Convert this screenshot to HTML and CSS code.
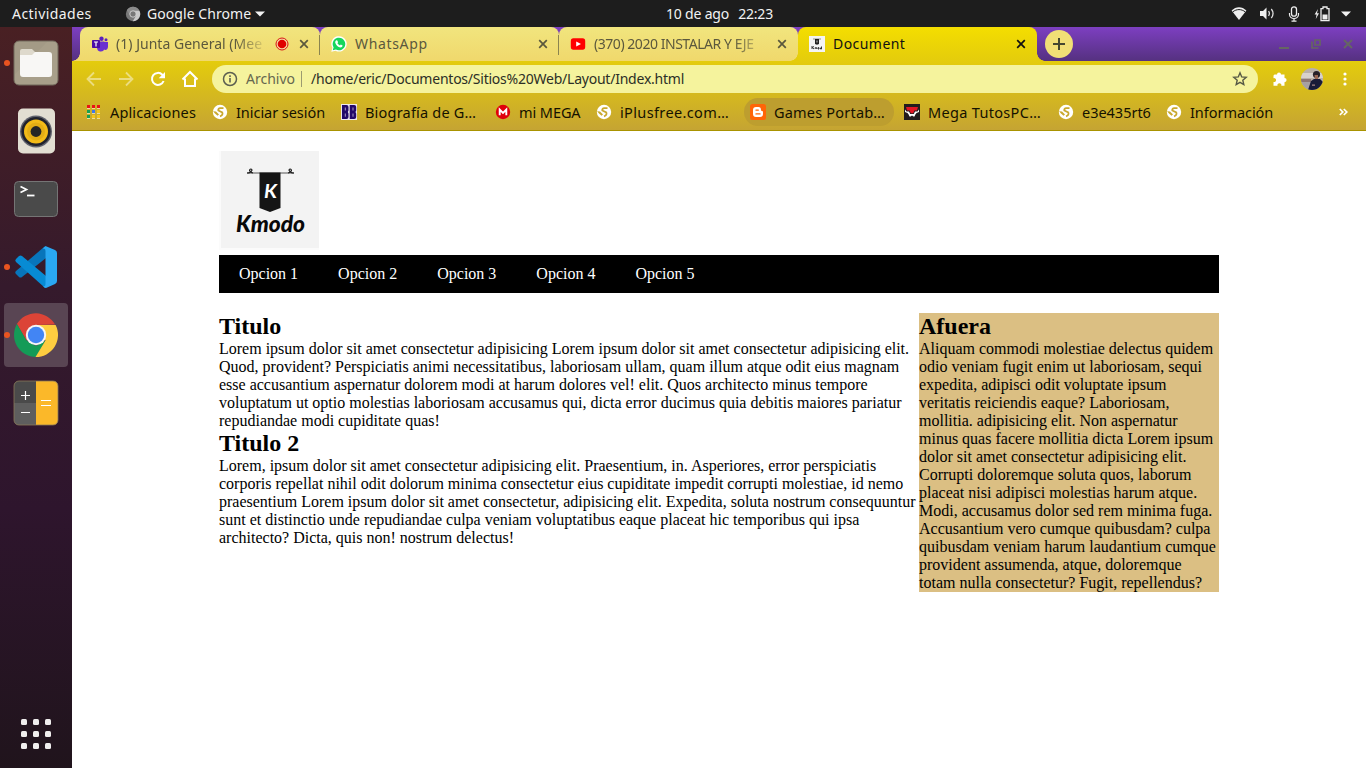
FILE: index.html
```
<!DOCTYPE html>
<html lang="es">
<head>
<meta charset="utf-8">
<title>Document</title>
<link rel="stylesheet" href="styles.css">
</head>
<body>
<svg class="defs" width="0" height="0">
  <symbol id="globe" viewBox="0 0 16 16"><circle cx="8" cy="8" r="7.2" fill="#fff"/><path d="M11.500 4.200H8.300Q6 4.500 6.300 6.500L10.300 8.500Q11.300 11 8 12.300" fill="none" stroke="#c9a92e" stroke-width="1.800"/><path d="M1 7.200l3 .3 3 3-1.500 1.200L3 9.500z" fill="#c9a92e"/></symbol>
  <symbol id="close" viewBox="0 0 10 10"><path d="M1.200 1.200l7.600 7.600M8.800 1.200L1.200 8.800" fill="none" stroke="currentColor" stroke-width="1.700"/></symbol>
</svg>
<div class="desktop">
  <header class="topbar">
    <div class="top-left">
      <span class="ls-act">Actividades</span>
      <svg class="top-chrome" width="16" height="16" viewBox="0 0 16 16"><circle cx="8" cy="8" r="7.200" fill="#777"/><path d="M8 4.500h6.300A7.200 7.200 0 0 1 7.800 15.200L11 9.800z" fill="#c9c9c9"/><path d="M1.800 4.300A7.200 7.200 0 0 1 14.300 4.500H8L4.800 9z" fill="#8b8b8b"/><circle cx="8" cy="8" r="3.200" fill="#777" stroke="#ddd" stroke-width=".8"/></svg>
      <span class="ls-goo">Google Chrome</span>
      <svg class="caret" width="10" height="6" viewBox="0 0 10 6"><path d="M0 .5h10L5 5.500z" fill="#f2f2f2"/></svg>
    </div>
    <div class="clock"><span>10 de ago</span><span>22:23</span></div>
    <div class="tray">
      <svg width="16" height="16" viewBox="0 0 16 16"><path d="M.6 4.500C5-.0 11-.0 15.400 4.500L8 14z" fill="#eee"/><path d="M1.800 5.900C5.500 2.800 10.500 2.800 14.200 5.900" fill="none" stroke="#1d1d1d" stroke-width="1"/></svg>
      <svg width="16" height="16" viewBox="0 0 16 16"><path d="M1 5h3l3.500-3.500v12L4 10H1z" fill="#eee"/><path d="M9.500 5.200q1.800 2.300 0 4.600M12.300 3q3.500 4.500 0 9" fill="none" stroke="#ddd" stroke-width="1.300"/></svg>
      <svg width="12" height="16" viewBox="0 0 12 16"><rect x="3.500" y=".8" width="5" height="9.400" rx="2.500" fill="none" stroke="#eee" stroke-width="1.300"/><path d="M1.500 7v1.500a4.500 4 0 0 0 9 0V7M6 12.500v2.700M3.500 15.200h5" fill="none" stroke="#eee" stroke-width="1.200"/></svg>
      <svg width="16" height="16" viewBox="0 0 16 16"><path d="M4 3L.6 8.600h2L1.800 13 5 7.300H3z" fill="#eee"/><path d="M7 2.600h2V1h4v1.600h2v12.100H7z" fill="none" stroke="#eee" stroke-width="1.300"/><path d="M8.500 8.500h5v5h-5z" fill="#eee"/></svg>
      <svg width="10" height="6" viewBox="0 0 10 6"><path d="M0 .5h10L5 5.500z" fill="#f2f2f2"/></svg>
    </div>
  </header>
  <div class="workspace">
    <nav class="dock">
      <div class="dock-item running"><svg width="46" height="46" viewBox="0 0 46 46"><rect x="1" y="1" width="44" height="44" rx="5" fill="#a39a86" stroke="#736b5d"/><path d="M2 34L34 2h7q3 0 3 3v36q0 3-3 3H5q-3 0-3-3z" fill="#aca38d" opacity=".6"/><path d="M7 11q0-2 2-2h10l3 3q1 2-2 3H7z" fill="#ded9cc"/><path d="M7 15h12l3-3h14q3 0 3 3v19q0 3-3 3H10q-3 0-3-3z" fill="#f8f7f5"/></svg></div>
      <div class="dock-item"><svg width="46" height="46" viewBox="0 0 46 46"><rect x="5" y=".5" width="37" height="45" rx="5" fill="#e2ded2"/><circle cx="23" cy="23.500" r="16" fill="#60626c"/><circle cx="23" cy="23.500" r="14.600" fill="#20222d"/><circle cx="23" cy="23.500" r="12" fill="#f3bb18"/><circle cx="23" cy="23.500" r="9" fill="#e3ad15"/><circle cx="23" cy="23.500" r="5.400" fill="#252525"/></svg></div>
      <div class="dock-item"><svg width="46" height="46" viewBox="0 0 46 46"><rect x="1.500" y="5.500" width="43" height="35" rx="4" fill="#4a4a4a" stroke="#757575"/><path d="M7.500 10.500l6 3-6 3" fill="none" stroke="#fff" stroke-width="1.700"/><path d="M14 19.500h7.500" stroke="#fff" stroke-width="1.800"/></svg></div>
      <div class="dock-item running"><svg width="46" height="46" viewBox="0 0 46 46"><path d="M33 2v12L9 33q-1.500 1-3 0l-3-3q-1.500-1.500 0-3L31 3z" fill="#0875bb"/><path d="M33 44V32L9 12q-1.500-1-3 0l-3 3q-1.500 1.500 0 3l28 25z" fill="#078bd4"/><path d="M33 2.200L42 6q2 1 2 3v28q0 2-2 3l-9 4q-2 0-3-2 2.500 1 2.500-2V7q0-3-2.500-2 .8-2 2.500-2.800z" fill="#2aa8f2"/></svg></div>
      <div class="dock-item running active"><svg width="46" height="46" viewBox="0 0 46 46"><path d="M3.950 12A22 22 0 0 1 42.050 12.600L23 13 13.470 28.500z" fill="#dc4437"/><path d="M3.950 12A22 22 0 0 0 23 45L32.500 28.500 23 34 13.500 28.500z" fill="#149b57"/><path d="M23 13h19.600A22 22 0 0 1 22.500 45L32.500 28.500z" fill="#fecd40"/><circle cx="23" cy="23" r="10.200" fill="#f5f5f5"/><circle cx="23" cy="23" r="8.200" fill="#4285f4"/></svg></div>
      <div class="dock-item"><svg width="46" height="46" viewBox="0 0 46 46"><path d="M23 1H6q-5 0-5 5v17h22z" fill="#4a4a4a"/><path d="M1 23h22v22H6q-5 0-5-5z" fill="#5e5e5e"/><path d="M23 1h17q5 0 5 5v34q0 5-5 5H23z" fill="#fbb829"/><rect x="1" y="1" width="44" height="44" rx="5" fill="none" stroke="#8a7a58" stroke-width=".8"/><path d="M8 15.500h9M12.500 11v9M8 32.500h9M28 20.500h10M28 25.500h10" stroke="#fff" stroke-width="1.200"/></svg></div>
      <div class="apps-grid"><i></i><i></i><i></i><i></i><i></i><i></i><i></i><i></i><i></i></div>
    </nav>
    <main class="browser">
      <div class="chrome">
        <div class="tabstrip">
          <div class="tab first">
            <svg class="fav" viewBox="0 0 16 16"><circle cx="9.500" cy="2.700" r="2.200" fill="#5b20bd"/><circle cx="14" cy="3.800" r="1.500" fill="#5b20bd"/><path d="M5 5.500h7.500V11q0 5-4.500 4.500Q5 15 5 11zM12.500 6H16v5q-.5 3.500-3.800 2.800z" fill="#6b2fd0"/><rect y="4" width="8" height="8" rx=".7" fill="#4a0da6"/><path d="M2 6h4M4 6v4.500" stroke="#fff" stroke-width="1.200"/></svg>
            <span class="tab-title fade ls-jun">(1) Junta General (Mee</span>
            <svg class="rec" width="14" height="14" viewBox="0 0 14 14"><circle cx="7" cy="7" r="6" fill="#f5d9a0" stroke="#d81313" stroke-width="1"/><circle cx="7" cy="7" r="4.300" fill="#e00000"/></svg>
            <svg class="x"><use href="#close"/></svg>
          </div>
          <div class="tab">
            <svg class="fav" viewBox="0 0 16 16"><path d="M.3 15.700L1.400 11.800A7.700 7.700 0 1 1 4.500 14.700z" fill="#fff"/><path d="M1.800 14.300l.8-3A6.300 6.300 0 1 1 4.900 13.500z" fill="#15d65b"/><path d="M5.200 4.300l1.100.1.800 1.800-.7 1q1 1.600 2.500 2.200l.9-.9 1.800.9q0 2-2.200 2-3.700-.5-5.200-4.700-.1-1.500 1-2.400z" fill="#fff"/></svg>
            <span class="tab-title ls-wha">WhatsApp</span>
            <svg class="x"><use href="#close"/></svg>
          </div>
          <div class="tab">
            <svg class="fav" viewBox="0 0 16 16"><rect x=".8" y="2.300" width="14.400" height="11.400" rx="2.600" fill="#f00"/><path d="M6.200 5.400L11 8l-4.800 2.600z" fill="#fff"/></svg>
            <span class="tab-title fade ls-ytb">(370) 2020 INSTALAR Y EJE</span>
            <svg class="x"><use href="#close"/></svg>
          </div>
          <div class="tab current">
            <svg class="fav" viewBox="0 0 16 16"><rect width="16" height="16" fill="#f4f4f4"/><path d="M4 3h8" stroke="#777" stroke-width=".8"/><path d="M6 3h4v5l-2 .8L6 8z" fill="#222"/><path d="M8 4.500v2" stroke="#ddd" stroke-width=".9"/><path d="M3 10v3M5 10.500l-1.700 1L5 13M6.200 13v-1.300h1.500V13M9 11.700h1V13H9zM12.500 10.500V13h-1v-1.300" fill="none" stroke="#222" stroke-width=".9"/></svg>
            <span class="tab-title ls-doc">Document</span>
            <svg class="x"><use href="#close"/></svg>
          </div>
          <div class="strip-end">
            <svg width="28" height="28" viewBox="0 0 28 28"><circle cx="14" cy="14" r="14" fill="#f1df76"/><path d="M8 14h12M14 8v12" stroke="#444730" stroke-width="2"/></svg>
            <div class="winbtns">
              <svg width="10" height="10" viewBox="0 0 10 10"><path d="M0 9h10" stroke="#666663" stroke-width="2"/></svg>
              <svg width="10" height="10" viewBox="0 0 10 10"><path d="M4 1h5v5H4zM1 2.500V9h6.500" fill="none" stroke="#666663" stroke-width="1.700"/></svg>
              <svg width="10" height="10" viewBox="0 0 10 10"><path d="M1 1l8 8M9 1L1 9" stroke="#666663" stroke-width="2"/></svg>
            </div>
          </div>
        </div>
        <div class="toolbar">
          <svg class="faded" width="16" height="16" viewBox="0 0 16 16"><path d="M15 8H2M8 1.500L1.500 8 8 14.500" fill="none" stroke="#fff" stroke-width="1.800"/></svg>
          <svg class="faded" width="16" height="16" viewBox="0 0 16 16"><path d="M1 8h13M8 1.500L14.500 8 8 14.500" fill="none" stroke="#fff" stroke-width="1.800"/></svg>
          <svg width="16" height="16" viewBox="0 0 16 16"><path d="M13.600 10A6 6 0 1 1 12.300 3.700L13.500 5" fill="none" stroke="#fff" stroke-width="2"/><path d="M15 1v6.300H8.700z" fill="#fff"/></svg>
          <svg width="18" height="18" viewBox="0 0 18 18"><path d="M1.500 9.500L9 2l7.500 7.500M4 8.500V16h10V8.500" fill="none" stroke="#fff" stroke-width="2"/></svg>
          <div class="omnibox">
            <svg width="16" height="16" viewBox="0 0 16 16"><circle cx="8" cy="8" r="6.500" fill="none" stroke="#5c5f50" stroke-width="1.500"/><path d="M8 7v4.500M8 4.200v1.700" stroke="#5c5f50" stroke-width="1.600"/></svg>
            <span class="scheme">Archivo</span>
            <span class="url">/home/eric/Documentos/Sitios%20Web/Layout/Index.html</span>
            <svg class="star" width="16" height="16" viewBox="0 0 16 16"><path d="M8 1.800l1.700 4.100 4.500.4-3.400 2.900 1 4.400L8 11.300l-3.800 2.300 1-4.400L1.800 6.300l4.500-.4z" fill="none" stroke="#565945" stroke-width="1.400"/></svg>
          </div>
          <svg class="ext" width="16" height="16" viewBox="0 0 16 16"><path d="M2.500 3.500H5a2 2 0 1 1 4 0h3.500V7a2 2 0 1 1 0 4.200v3.600H9.300a2 2 0 1 0-3.800 0H1.500V11a2 2 0 1 0 0-3.800V4.500z" fill="#fff"/></svg>
          <svg class="avatar" width="22" height="22" viewBox="0 0 22 22"><clipPath id="av"><circle cx="11" cy="11" r="11"/></clipPath><g clip-path="url(#av)"><path d="M0 0h22v22H0z" fill="#b9b0a8"/><path d="M0 5h22v5H0z" fill="#d8d1cc"/><path d="M0 11h10v3H0z" fill="#8d7675"/><path d="M0 14h10v8H0z" fill="#a7a0a3"/><path d="M7 22l3-9 3-2h6l4 4v8z" fill="#191b38"/><circle cx="15.500" cy="6.500" r="3.600" fill="#262027"/><path d="M13.500 7h3.500v4h-3z" fill="#9a6753"/><path d="M11 16.500h3v1.200h-3z" fill="#a78582"/></g></svg>
          <svg class="menu" width="4" height="16" viewBox="0 0 4 16"><circle cx="2" cy="3" r="1.600" fill="#fff"/><circle cx="2" cy="8" r="1.600" fill="#fff"/><circle cx="2" cy="13" r="1.600" fill="#fff"/></svg>
        </div>
        <div class="bookmarks">
          <a class="bm"><svg viewBox="0 0 16 16"><path d="M1 1h3v3H1zM6 1h3v3H6zM11 1h3v3h-3z" fill="#e91515"/><path d="M1 6h3v3H1zM1 11h3v3H1z" fill="#16a052"/><path d="M6 6h3v3H6z" fill="#3f78ea"/><path d="M11 6h3v3h-3zM6 11h3v3H6zM11 11h3v3h-3z" fill="#f6c518"/><path d="M6 4h3v1H6zM1 4h3v1H1zM11 4h3v1h-3zM1 9h3v1H1zM6 9h3v1H6zM11 9h3v1h-3zM1 14h3v1H1zM6 14h3v1H6zM11 14h3v1h-3z" fill="#eddc9c"/></svg><span class="ls-apl">Aplicaciones</span></a>
          <a class="bm"><svg><use href="#globe"/></svg><span class="ls-ini">Iniciar sesión</span></a>
          <a class="bm"><svg viewBox="0 0 16 16"><path d="M0 0h16v16H0z" fill="#eee8ed"/><path d="M1 1h4.500q2 0 2 2v3.500L6.800 8l.7 1.500V13q0 2-2 2H1zM8.700 1h4.500q2 0 2 2v3.500L14.500 8l.7 1.500V13q0 2-2 2H8.700z" fill="#22086a"/><path d="M4.300 3.500v3M4.300 9.500v3.200M12 3.500v3M12 9.500v3.200" stroke="#cdc4dc" stroke-width=".8"/></svg><span class="ls-bio">Biografía de G…</span></a>
          <a class="bm"><svg viewBox="0 0 16 16"><circle cx="8" cy="8" r="7.200" fill="#e0000b"/><path d="M4.700 11.300V5.500L8 8.800l3.300-3.300v5.800" fill="none" stroke="#fff" stroke-width="1.900"/></svg><span class="ls-meg">mi MEGA</span></a>
          <a class="bm"><svg><use href="#globe"/></svg><span class="ls-ipl">iPlusfree.com…</span></a>
          <a class="bm chip"><svg viewBox="0 0 16 16"><rect width="16" height="16" rx="2.500" fill="#ff6507"/><path d="M6 3h2.500Q11 3 11 6q0 1 1 1t1 1v2q0 3-3 3H6q-3 0-3-3V6q0-3 3-3z" fill="#fff"/><path d="M6 6.100h2.300M6 9.900h4" stroke="#ff6507" stroke-width="1.400" stroke-linecap="round"/></svg><span class="ls-gam">Games Portab…</span></a>
          <a class="bm"><svg viewBox="0 0 16 16"><path d="M0 0h16v16H0z" fill="#221c1e"/><path d="M2 3h12l-1 3.500H3z" fill="#e11624"/><path d="M1 5.500L2.500 7.500H5l1.200 2.500h3.600L11 7.500h2.500L15 5.500V8l-2.500 1-1 1.200-1 2.300H9.300L8 11.500l-1.300 1H5.500l-1-2.300-1-1.200L1 8z" fill="#fff"/><path d="M5.500 6h5L9.300 9.200H6.700z" fill="#e11624"/></svg><span class="ls-tut">Mega TutosPC…</span></a>
          <a class="bm"><svg><use href="#globe"/></svg><span class="ls-e3e">e3e435rt6</span></a>
          <a class="bm"><svg><use href="#globe"/></svg><span class="ls-inf">Información</span></a>
          <svg class="more" width="9" height="8" viewBox="0 0 9 8"><path d="M.8 1l3 3-3 3M4.800 1l3 3-3 3" fill="none" stroke="#fff" stroke-width="1.700"/></svg>
        </div>
      </div>
      <div class="page">
        <div class="container">
          <svg class="logo" width="100" height="100" viewBox="0 0 100 100">
            <rect width="100" height="98" fill="#f3f3f3"/><path d="M0 0h2v97h98v2H0z" fill="#fbfbfb"/>
            <path d="M28 22h47" stroke="#555" stroke-width="1"/>
            <path d="M28 22q4 0 5-3-1-2-2.500 0 0 2 3.500 3M75 22q-4 0-5-3 1-2 2.500 0 0 2-3.500 3" fill="none" stroke="#222" stroke-width="1.200"/>
            <path d="M40.500 21.500h21V57l-10.500 4-10.500-4z" fill="#151515"/>
            <text class="script-k" x="45" y="46.500" textLength="13" lengthAdjust="spacingAndGlyphs">K</text>
            <text class="script" x="17" y="81" textLength="69" lengthAdjust="spacingAndGlyphs">Kmodo</text>
          </svg>
          <div class="menu-bar"><a>Opcion 1</a><a>Opcion 2</a><a>Opcion 3</a><a>Opcion 4</a><a>Opcion 5</a></div>
          <div class="columns">
            <section class="content">
              <h2>Titulo</h2>
              <p>Lorem ipsum dolor sit amet consectetur adipisicing Lorem ipsum dolor sit amet consectetur adipisicing elit. Quod, provident? Perspiciatis animi necessitatibus, laboriosam ullam, quam illum atque odit eius magnam esse accusantium aspernatur dolorem modi at harum dolores vel! elit. Quos architecto minus tempore voluptatum ut optio molestias laboriosam accusamus qui, dicta error ducimus quia debitis maiores pariatur repudiandae modi cupiditate quas!</p>
              <h2>Titulo 2</h2>
              <p>Lorem, ipsum dolor sit amet consectetur adipisicing elit. Praesentium, in. Asperiores, error perspiciatis corporis repellat nihil odit dolorum minima consectetur eius cupiditate impedit corrupti molestiae, id nemo praesentium Lorem ipsum dolor sit amet consectetur, adipisicing elit. Expedita, soluta nostrum consequuntur sunt et distinctio unde repudiandae culpa veniam voluptatibus eaque placeat hic temporibus qui ipsa architecto? Dicta, quis non! nostrum delectus!</p>
            </section>
            <aside class="aside">
              <h2>Afuera</h2>
              <p>Aliquam commodi molestiae delectus quidem odio veniam fugit enim ut laboriosam, sequi expedita, adipisci odit voluptate ipsum veritatis reiciendis eaque? Laboriosam, mollitia. adipisicing elit. Non aspernatur minus quas facere mollitia dicta Lorem ipsum dolor sit amet consectetur adipisicing elit. Corrupti doloremque soluta quos, laborum placeat nisi adipisci molestias harum atque. Modi, accusamus dolor sed rem minima fuga. Accusantium vero cumque quibusdam? culpa quibusdam veniam harum laudantium cumque provident assumenda, atque, doloremque totam nulla consectetur? Fugit, repellendus?</p>
            </aside>
          </div>
        </div>
      </div>
    </main>
  </div>
</div>
</body>
</html>
```
FILE: styles.css
```
* { box-sizing: border-box; margin: 0; padding: 0; }
body { width: 1366px; height: 768px; overflow: hidden; background: #fff; }
svg { display: block; flex: none; }
.defs { position: absolute; }
.desktop { width: 1366px; height: 768px; display: flex; flex-direction: column; }
.topbar, .chrome { font: 14px/20px "Noto Sans", "Open Sans", sans-serif; white-space: nowrap; }

.topbar { height: 27px; flex: none; background: #1d1d1d; color: #f2f2f2; display: grid; grid-template-columns: 666px 107px 1fr; align-items: center; }
.top-left { display: flex; align-items: center; padding-left: 12px; }
.top-left .ls-act { width: 113px; }
.top-chrome { margin-right: 6px; }
.top-left .caret { margin-left: 4px; }
.clock { display: flex; justify-content: space-between; letter-spacing: -.19px; }
.tray { display: flex; align-items: center; padding-left: 458px; }
.tray svg + svg { margin-left: 12px; }
.tray svg:nth-child(3) { margin-left: 13px; }
.tray svg:nth-child(4) { margin-left: 14px; }
.tray svg:nth-child(5) { margin-left: 11px; }

.workspace { flex: 1; display: flex; min-height: 0; }
.dock { width: 72px; flex: none; display: flex; flex-direction: column; align-items: flex-end; gap: 4px; padding: 4px 4px 19px 0; background: linear-gradient(#492023, #351a2c 35%, #2e152d 65%, #20141c); }
.dock-item { width: 64px; height: 64px; display: flex; align-items: center; justify-content: center; border-radius: 4px; position: relative; }
.dock-item.active { background: #594553; }
.dock-item.running::before { content: ""; position: absolute; left: 0; top: 29px; width: 6px; height: 6px; border-radius: 50%; background: #e95420; }
.apps-grid { display: grid; grid-template-columns: repeat(3, 6px); gap: 6px; margin: auto 17px 0 0; }
.apps-grid i { height: 6px; border-radius: 1.5px; background: #f0eeee; }

.browser { flex: 1; min-width: 0; display: flex; flex-direction: column; background: #fff; }
.chrome { height: 104px; flex: none; background: linear-gradient(#f4de00, #e4cc0c 34px, #c5a433 103px); border-bottom: 1px solid #a99300; color: #151200; }
.tabstrip { height: 34px; display: flex; background: linear-gradient(#7d3fc1, #553180); padding-left: 8px; }
.tab { width: 239px; flex: none; height: 34px; display: flex; align-items: center; padding: 0 11px; position: relative; border-radius: 8px 8px 0 0; background: linear-gradient(#f1e57e, #f0d86c); color: #5b583d; }
.tab.first { width: 240px; padding-left: 12px; }
.tab:not(.current)::after { content: ""; position: absolute; right: 0; top: 8px; width: 1px; height: 20px; background: #8b844f; }
.tab:nth-child(3)::after { display: none; }
.tab:nth-child(3) { background: radial-gradient(circle at 0 0, transparent 7.5px, #e4cc0c 8px) right bottom / 8px 8px no-repeat, linear-gradient(#f1e57e, #f0d86c); }
.tab.current { width: 239px; background: linear-gradient(#f4de00, #e4cc0c); color: #111; }
.tab.first::before, .tab.current::before { content: ""; position: absolute; bottom: 0; width: 8px; height: 8px; }
.tab.first::before { left: -8px; background: radial-gradient(circle at 0 0, transparent 7.5px, #f0d86c 8px); }
.tab.current::before { right: -8px; background: radial-gradient(circle at 100% 0, transparent 7.5px, #e4cc0c 8px); }
.fav { width: 16px; height: 16px; margin-right: 8px; }
.tab-title { flex: 1; min-width: 0; }
.tab-title.fade { -webkit-mask-image: linear-gradient(90deg, #000 calc(100% - 34px), transparent); mask-image: linear-gradient(90deg, #000 calc(100% - 34px), transparent); }
.rec { margin: 0 10px 0 6px; }
.x { width: 10px; height: 10px; margin-left: 10px; }
.rec + .x { margin-left: 0; }
.strip-end { flex: 1; display: flex; align-items: center; justify-content: space-between; padding: 0 13px 0 8px; }
.winbtns { display: flex; gap: 22px; }

.toolbar { height: 36px; display: flex; align-items: center; padding-left: 14px; }
.toolbar > svg:nth-child(2), .toolbar > svg:nth-child(3) { margin-left: 16px; }
.toolbar > svg:nth-child(4) { margin-left: 15px; }
.faded { opacity: .45; }
.omnibox { width: 1046px; height: 28px; margin-left: 13px; border-radius: 14px; background: #f5f39d; display: flex; align-items: center; padding: 0 10px; color: #2c2f26; }
.scheme { margin-left: 8px; width: 56px; height: 16px; line-height: 16px; border-right: 1px solid #9b9b70; color: #66684f; }
.url { margin-left: 9px; letter-spacing: -.23px; }
.star { margin-left: auto; }
.ext { margin-left: 14px; }
.toolbar .avatar { margin-left: 13px; }
.toolbar .menu { margin-left: 20px; }

.bookmarks { height: 30px; display: grid; grid-template-columns: 126px 129px 154px 101px 148px 160px 154px 108px 171px 9px; align-items: center; padding-left: 14px; font-size: 14.5px; }
.bm { display: flex; align-items: center; height: 28px; }
.bm svg { width: 16px; height: 16px; margin-right: 8px; }
.bm.chip { width: 150px; border-radius: 14px; background: #bd9e2f; padding-left: 6px; }
.more { margin-left: 2px; }

.ls-act { letter-spacing: .45px; }
.ls-goo { letter-spacing: .06px; }
.ls-jun { letter-spacing: .02px; }
.ls-wha { letter-spacing: .65px; }
.ls-ytb { letter-spacing: -.46px; }
.ls-doc { letter-spacing: .45px; }
.ls-apl { letter-spacing: .14px; }
.ls-ini { letter-spacing: -.05px; }
.ls-bio { letter-spacing: .2px; }
.ls-meg { letter-spacing: -.08px; }
.ls-ipl { letter-spacing: .37px; }
.ls-gam { letter-spacing: .2px; }
.ls-tut { letter-spacing: .32px; }
.ls-e3e { letter-spacing: -.02px; }
.ls-inf { letter-spacing: -.05px; }

.page { flex: 1; padding: 20px 147px; font: 16px/18px "Liberation Serif", serif; color: #000; }
.container { width: 1000px; }
.logo { margin-bottom: 4px; }
.script, .script-k { font-family: "Lato", "Open Sans", sans-serif; font-style: italic; font-weight: 900; font-size: 23px; fill: #080808; }
.script-k { font-size: 19px; font-weight: 700; fill: #fff; }
.menu-bar { display: flex; height: 38px; background: #000; color: #fff; }
.menu-bar a { padding: 10px 20px; }
.columns { display: flex; align-items: flex-start; margin-top: 20px; }
.content { width: 700px; }
.aside { width: 300px; background: #dbbf83; }
h2 { font-size: 24px; line-height: 27px; font-weight: 700; }
```
